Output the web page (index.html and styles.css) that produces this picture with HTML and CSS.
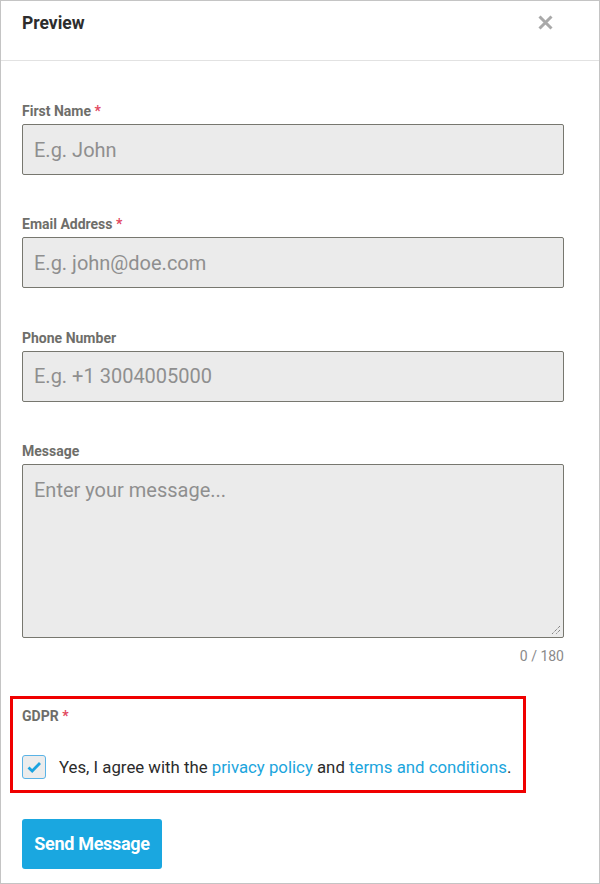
FILE: index.html
```html
<!DOCTYPE html>
<html>
<head>
<meta charset="utf-8">
<link rel="stylesheet" href="styles.css">
</head>
<body>
<div class="frame">
  <div class="header">
    <div class="title">Preview</div>
    <svg class="close" width="15" height="15" viewBox="0 0 15 15"><path d="M1.5 1.5L13.5 13.5M13.5 1.5L1.5 13.5" stroke="#a9a9a9" stroke-width="3" stroke-linecap="butt"/></svg>
  </div>
  <div class="body">
    <div class="field">
      <div class="label">First Name <span class="req">*</span></div>
      <div class="input"><span class="ph">E.g. John</span></div>
    </div>
    <div class="field">
      <div class="label">Email Address <span class="req">*</span></div>
      <div class="input"><span class="ph">E.g. john@doe.com</span></div>
    </div>
    <div class="field">
      <div class="label">Phone Number</div>
      <div class="input"><span class="ph">E.g. +1 3004005000</span></div>
    </div>
    <div class="field msg">
      <div class="label">Message</div>
      <div class="textarea"><span class="ph">Enter your message...</span>
        <svg class="grip" width="10" height="10" viewBox="0 0 10 10"><path d="M9 1L1 9M9 5L5 9" stroke="#555" stroke-width="1" stroke-dasharray="1 1"/></svg>
      </div>
      <div class="counter">0 / 180</div>
    </div>
    <div class="gdpr">
      <div class="label">GDPR <span class="req">*</span></div>
      <div class="check-row">
        <span class="checkbox"><svg width="15" height="12" viewBox="0 0 15 12"><path d="M1.5 6.5L5.2 10L13 2" fill="none" stroke="#1aa3e0" stroke-width="2.8"/></svg></span>
        <span class="agree">Yes, I agree with the <a class="link">privacy policy</a> and <a class="link">terms and conditions</a>.</span>
      </div>
    </div>
    <button class="send">Send Message</button>
  </div>
</div>
</body>
</html>
```
FILE: styles.css
```css
html, body {
  margin: 0;
  padding: 0;
  background: #fff;
}
body {
  font-family: Roboto, "Liberation Sans", sans-serif;
}
.frame {
  box-sizing: border-box;
  width: 600px;
  height: 884px;
  border: 1px solid #c4c4c4;
  background: #fff;
}
.header {
  height: 59px;
  border-bottom: 1px solid #e2e2e2;
  display: flex;
  align-items: flex-start;
  justify-content: space-between;
  padding: 0 46px 0 21px;
}
.title {
  margin-top: 12px;
  font-size: 17.5px;
  font-weight: 700;
  color: #2d2d2d;
  line-height: 20px;
}
.close {
  margin-top: 14px;
}
.body {
  padding: 0 35px 0 21px;
}
.field {
  margin-top: 40px;
}
.field + .field {
  margin-top: 39.3px;
}
.label {
  font-size: 14px;
  font-weight: 700;
  color: #6e6e6a;
  line-height: 20px;
  margin-bottom: 3px;
}
.req {
  color: #e2485f;
}
.input, .textarea {
  box-sizing: border-box;
  height: 51px;
  background: #ebebeb;
  border: 1px solid #77776f;
  border-radius: 2px;
  padding: 0 11px;
  display: flex;
  align-items: center;
  font-size: 20px;
  color: #8f8f8f;
}
.textarea {
  position: relative;
  height: 174px;
  align-items: flex-start;
  padding-top: 13px;
}
.grip {
  position: absolute;
  right: 2px;
  bottom: 2px;
}
.counter {
  text-align: right;
  font-size: 14px;
  color: #8a8a8a;
  margin-top: 10px;
  line-height: 17px;
}
.gdpr {
  margin: 31px 0 0 -12px;
  width: 516px;
  box-sizing: border-box;
  border: 3px solid #f00000;
  padding: 7px 9px 11px 9px;
}
.check-row {
  display: flex;
  align-items: center;
  margin-top: 29px;
}
.checkbox {
  flex: none;
  box-sizing: border-box;
  width: 24px;
  height: 24px;
  border: 1px solid #5ab3e6;
  border-radius: 3px;
  background: #ececec;
  display: flex;
  align-items: center;
  justify-content: center;
  margin-right: 13px;
}
.agree {
  font-size: 16.8px;
  color: #2b2b2b;
  white-space: nowrap;
}
.link {
  color: #1ba5dd;
}
.send {
  margin-top: 26px;
  width: 140px;
  height: 50px;
  background: #1aa7e0;
  border: none;
  border-radius: 3px;
  color: #fff;
  font-family: Roboto, "Liberation Sans", sans-serif;
  font-size: 18px;
  font-weight: 700;
  letter-spacing: -0.3px;
  padding: 0;
}
```
